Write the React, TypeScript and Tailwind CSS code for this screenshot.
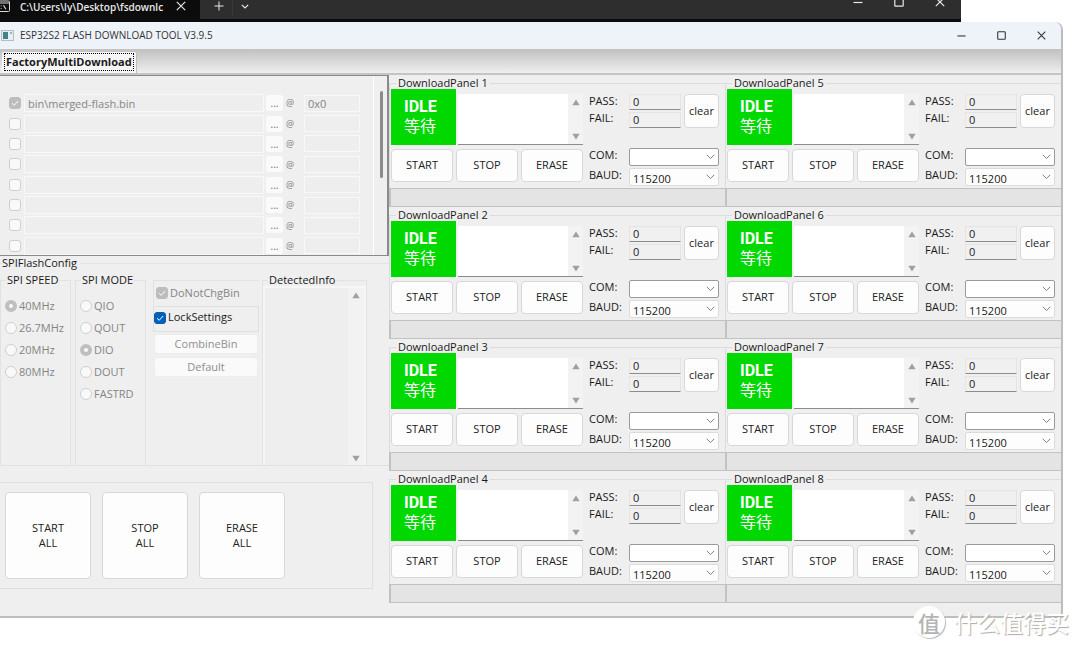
import React from "react";

const FILE_ROWS = [
  { path: "bin\\merged-flash.bin", offset: "0x0", on: true },
  { path: "", offset: "", on: false },
  { path: "", offset: "", on: false },
  { path: "", offset: "", on: false },
  { path: "", offset: "", on: false },
  { path: "", offset: "", on: false },
  { path: "", offset: "", on: false },
  { path: "", offset: "", on: false },
];

function CloseIcon({ className }: { className: string }) {
  return (
    <svg viewBox="0 0 10 10" className={className} fill="none" stroke="currentColor" strokeWidth="1.2">
      <path d="M0.8 0.8 9.2 9.2M9.2 0.8 0.8 9.2" />
    </svg>
  );
}

function MinIcon({ className }: { className: string }) {
  return (
    <svg viewBox="0 0 10 10" className={className} fill="none" stroke="currentColor" strokeWidth="1.2">
      <path d="M0.5 5.5h9" />
    </svg>
  );
}

function MaxIcon({ className }: { className: string }) {
  return (
    <svg viewBox="0 0 10 10" className={className} fill="none" stroke="currentColor" strokeWidth="1.2">
      <rect x="0.8" y="0.8" width="8.4" height="8.4" rx="0.8" />
    </svg>
  );
}

function Terminal() {
  return (
    <div className="mr-[119px] flex h-[22px] items-start overflow-hidden border-b-3 border-[#0c0c0c] bg-[#2e2e2e] text-[#e8e8e8]">
      <div className="flex h-full w-[200px] shrink-0 items-start bg-[#0c0c0c]">
        <svg viewBox="0 0 10 12" className="h-3 w-[10px] shrink-0" fill="none" stroke="#d6d6d6">
          <path d="M-4 1h12.5q1 0 1 1v8.5q0 1-1 1H-4M-4 3h13" />
          <path d="M3.5 5.2l2.4 4M1.2 5.5v.8M1.2 8v.8" strokeWidth="1.2" />
        </svg>
        <div className="ml-[10px] w-[147px] text-[10px] leading-[14px] font-semibold whitespace-nowrap">
          C:\Users\ly\Desktop\fsdownlc
        </div>
        <button aria-label="Close tab" className="mt-[1px] ml-[9px]">
          <CloseIcon className="size-[10px]" />
        </button>
      </div>
      <button aria-label="New tab" className="mt-[1px] ml-[14px]">
        <svg viewBox="0 0 10 10" className="size-[10px]" stroke="currentColor">
          <path d="M5 0.5v9M0.5 5h9" />
        </svg>
      </button>
      <span className="ml-2 h-4 w-px bg-[#3a3a3a]" />
      <button aria-label="Tab menu" className="mt-1 ml-2">
        <svg viewBox="0 0 8 5" className="h-[5px] w-2" fill="none" stroke="currentColor" strokeWidth="1.2">
          <path d="M0.8 0.8 4 4 7.2 0.8" />
        </svg>
      </button>
      <div className="ml-auto flex gap-[31px] pr-4">
        <button aria-label="Minimize terminal" className="-mt-[3px]"><MinIcon className="size-[10px]" /></button>
        <button aria-label="Maximize terminal" className="-mt-[3px]"><MaxIcon className="size-[10px]" /></button>
        <button aria-label="Close terminal" className="-mt-[3px]"><CloseIcon className="size-[10px]" /></button>
      </div>
    </div>
  );
}

function TitleBar() {
  return (
    <header className="flex h-[27px] items-center rounded-tr-lg bg-[#eef3fa] pr-[15px] text-[#333]">
      <svg viewBox="0 0 13 11" className="ml-[1px] h-[11px] w-[13px]">
        <rect x="0.5" y="0.5" width="12" height="10" fill="#e9eef2" stroke="#b5bcc2" />
        <rect x="2" y="2" width="5" height="7" fill="#3f8587" />
        <rect x="9" y="2" width="2" height="2" fill="#8cb3c4" />
      </svg>
      <h1 className="ml-[6px] text-[10px]">ESP32S2 FLASH DOWNLOAD TOOL V3.9.5</h1>
      <div className="ml-auto flex gap-[31px]">
        <button aria-label="Minimize"><MinIcon className="size-[9px]" /></button>
        <button aria-label="Maximize"><MaxIcon className="size-[9px]" /></button>
        <button aria-label="Close"><CloseIcon className="size-[9px]" /></button>
      </div>
    </header>
  );
}

function Check({ label, checked, disabled, children }: { label?: string; checked: boolean; disabled?: boolean; children?: React.ReactNode }) {
  return (
    <label className={disabled ? "flex items-center gap-[2px] text-[#858585]" : "flex items-center gap-[2px] text-[#1a1a1a]"}>
      <span className="grid size-3 shrink-0">
        <input
          type="checkbox"
          aria-label={label}
          defaultChecked={checked}
          disabled={disabled}
          className="col-start-1 row-start-1 size-3 appearance-none rounded-[3px] border border-[#cfcfcf] bg-[#f9f9f9] checked:border-[#005fb8] checked:bg-[#005fb8] disabled:checked:border-[#bdbdbd] disabled:checked:bg-[#bdbdbd]"
        />
        {checked && (
          <svg viewBox="0 0 12 12" className="pointer-events-none col-start-1 row-start-1 size-3" fill="none" stroke="#fff">
            <path d="M3 6.2 5.2 8.3 9.2 4" />
          </svg>
        )}
      </span>
      {children}
    </label>
  );
}

function FileList() {
  return (
    <section className="flex h-[181px] overflow-hidden border-t border-r-2 border-b border-[#8a8a8a]">
      <div className="mt-[17px] -mb-[1px] flex flex-1 flex-col">
        {FILE_ROWS.map((row, i) => (
          <div key={i} className="flex flex-1 items-center pl-[9px]">
            <Check label={`Use file ${i + 1}`} checked={row.on} disabled />
            <input
              aria-label={`File path ${i + 1}`}
              defaultValue={row.path}
              disabled
              className="ml-[3px] h-[18px] min-w-0 flex-1 border border-[#f8f8f8] bg-[#eeeeee] px-[3px] text-[11px] text-[#858585]"
            />
            <button disabled aria-label={`Browse file ${i + 1}`} className="ml-[2px] h-4 w-[17px] rounded-[2px] bg-[#fafafa] text-[10px] leading-4 text-[#707070]">
              ...
            </button>
            <span className="ml-[3px] w-[10px] text-[9px] text-[#7d7d7d]">@</span>
            <input
              aria-label={`Offset ${i + 1}`}
              defaultValue={row.offset}
              disabled
              className="ml-2 h-[17px] w-14 border border-[#f8f8f8] bg-[#eeeeee] px-[3px] text-[11px] text-[#858585]"
            />
          </div>
        ))}
      </div>
      <div className="ml-[13px] w-[14px] border-l border-white pt-[15px] pl-[6px]">
        <div className="h-[87px] w-[3px] rounded-full bg-[#8b8b8b]" />
      </div>
    </section>
  );
}

function RadioGroup({ title, name, items, value }: { title: string; name: string; items: string[]; value: string }) {
  return (
    <fieldset className="w-[71px] min-w-0 border border-[#e2e2e2] pt-[9px] pl-1">
      <legend className="ml-[1px] px-[1px] text-[11px] leading-3 whitespace-nowrap text-[#1a1a1a]">{title}</legend>
      {items.map((it) => (
        <label key={it} className="flex h-[22px] items-center gap-[2px] whitespace-nowrap text-[#858585]">
          <input
            type="radio"
            name={name}
            disabled
            defaultChecked={it === value}
            className="size-3 shrink-0 appearance-none rounded-full border border-[#cfcfcf] bg-[#f9f9f9] checked:border-4 checked:border-[#bfbfbf]"
          />
          {it}
        </label>
      ))}
    </fieldset>
  );
}

function Arrow({ down }: { down?: boolean }) {
  return (
    <svg viewBox="0 0 8 7" className="h-[7px] w-2" fill="#a0a0a0">
      {down ? <path d="M0.3 0.8h7.4L4 6.6z" /> : <path d="M0.3 6.2h7.4L4 0.4z" />}
    </svg>
  );
}

function FlashConfig() {
  return (
    <fieldset className="mt-[1px] h-[209px] min-w-0 border-t border-b border-[#e2e2e2]">
      <legend className="ml-[2px] pr-[3px] text-[11px] leading-3">SPIFlashConfig</legend>
      <div className="mt-[5px] flex h-[192px] items-stretch">
        <RadioGroup title="SPI SPEED" name="speed" items={["40MHz", "26.7MHz", "20MHz", "80MHz"]} value="40MHz" />
        <div className="w-1" />
        <RadioGroup title="SPI MODE" name="mode" items={["QIO", "QOUT", "DIO", "DOUT", "FASTRD"]} value="DIO" />
        <div className="mt-[6px] ml-[7px] flex w-[106px] flex-col">
          <div className="flex h-[25px] items-center border-t border-l border-[#e2e2e2] pl-[2px]">
            <Check checked disabled>DoNotChgBin</Check>
          </div>
          <div className="mt-[1px] flex h-[26px] items-center border border-[#e0e0e0] pb-[3px]">
            <Check checked>LockSettings</Check>
          </div>
          <button disabled className="mx-[1px] mt-[2px] h-5 rounded-[3px] border border-[#ededed] bg-[#fafafa] leading-4 text-[#8f8f8f]">CombineBin</button>
          <button disabled className="mx-[1px] mt-[3px] h-5 rounded-[3px] border border-[#ededed] bg-[#fafafa] leading-4 text-[#8f8f8f]">Default</button>
        </div>
        <fieldset className="ml-[3px] w-[105px] min-w-0 border border-[#e2e2e2]">
          <legend className="ml-[5px] px-[1px] text-[11px] leading-3">DetectedInfo</legend>
          <div className="flex h-[179px] border-2 border-b-0 border-[#f6f6f6]">
            <textarea aria-label="Detected info" disabled className="w-0 min-w-0 flex-1 resize-none bg-[#eeeeee]" />
            <div className="flex w-4 flex-col items-center justify-between bg-[#f2f2f2] pt-1 pb-[3px]">
              <Arrow />
              <Arrow down />
            </div>
          </div>
        </fieldset>
      </div>
    </fieldset>
  );
}

function AllButtons() {
  return (
    <section className="mt-4 mr-4 flex h-[107px] gap-[11px] border border-l-0 border-[#dfdfdf] py-[9px] pl-[5px]">
      {["START", "STOP", "ERASE"].map((t) => (
        <button key={t} className="w-[86px] rounded-[4px] border border-[#d8d8d8] bg-[#fdfdfd] pb-[2px] text-[11px] leading-[15px] text-[#222]">
          {t}
          <br />
          ALL
        </button>
      ))}
    </section>
  );
}

function Chevron() {
  return (
    <svg viewBox="0 0 9 6" className="pointer-events-none col-start-1 row-start-1 mr-1 h-[6px] w-[9px] self-center justify-self-end" fill="none" stroke="#808080">
      <path d="M0.8 0.8 4.5 4.6 8.2 0.8" />
    </svg>
  );
}

function Panel({ n }: { n: number }) {
  const id = `p${n}`;
  return (
    <section className="h-[132px] min-w-0 pt-[2px]">
      <fieldset className="h-[111px] min-w-0 border-t border-l border-[#dcdcdc] pl-[1px]">
        <legend className="ml-[5px] px-[2px] text-[11px] leading-3">DownloadPanel {n}</legend>
        <div className="flex pr-[6px]">
          <div className="flex min-w-0 flex-1 flex-col">
            <div className="flex h-14 gap-[2px]">
              <div className="flex w-[65px] shrink-0 flex-col bg-[#00d800] pt-[9px] pl-[13px] text-[16px] leading-[18px] text-white">
                <span className="font-[Roboto] font-bold">IDLE</span>
                <span className="font-['Noto_Sans_CJK_SC',sans-serif]">等待</span>
              </div>
              <div className="mt-[5px] flex min-w-0 flex-1 border-b border-[#8c8c8c] bg-white">
                <textarea aria-label={`Log ${n}`} readOnly className="w-0 min-w-0 flex-1 resize-none bg-white" />
                <div className="flex w-[15px] flex-col items-center justify-between bg-[#f3f3f3] pt-[5px] pb-1">
                  <Arrow />
                  <Arrow down />
                </div>
              </div>
            </div>
            <div className="mt-1 grid grid-cols-3 gap-[3px]">
              {["START", "STOP", "ERASE"].map((t) => (
                <button key={t} className="h-[33px] rounded-[4px] border border-[#d8d8d8] bg-[#fdfdfd] text-[11px] text-[#222]">{t}</button>
              ))}
            </div>
          </div>
          <div className="mt-[5px] ml-[6px] w-[130px] shrink-0">
            <div className="flex">
              <div className="w-10">
                <label htmlFor={`${id}-pass`} className="block h-[17px] leading-[14px]">PASS:</label>
                <label htmlFor={`${id}-fail`} className="block h-[17px] leading-[14px]">FAIL:</label>
              </div>
              <div className="flex w-[52px] flex-col gap-[2px]">
                <input id={`${id}-pass`} readOnly value="0" className="h-4 w-full border border-[#e4e4e4] border-b-[#8c8c8c] bg-[#f0f0f0] px-[3px] text-[11px]" />
                <input id={`${id}-fail`} readOnly value="0" className="h-4 w-full border border-[#e4e4e4] border-b-[#8c8c8c] bg-[#f0f0f0] px-[3px] text-[11px]" />
              </div>
              <button className="ml-[3px] h-[34px] flex-1 rounded-[4px] border border-[#d8d8d8] bg-[#fdfdfd] text-[11px] text-[#222]">clear</button>
            </div>
            <div className="mt-5 flex">
              <div className="w-10">
                <label htmlFor={`${id}-com`} className="block h-5 leading-[14px]">COM:</label>
                <label htmlFor={`${id}-baud`} className="block h-[18px] leading-[14px]">BAUD:</label>
              </div>
              <div className="flex flex-1 flex-col gap-[2px]">
                <div className="grid">
                  <select id={`${id}-com`} className="col-start-1 row-start-1 h-[18px] appearance-none rounded-[2px] border border-[#9a9a9a] bg-white px-[3px]">
                    <option></option>
                  </select>
                  <Chevron />
                </div>
                <div className="grid">
                  <select id={`${id}-baud`} className="col-start-1 row-start-1 h-[18px] appearance-none rounded-[2px] border border-[#dcdcdc] bg-[#fdfdfd] px-[3px] pt-[2px] leading-[13px]">
                    <option>115200</option>
                  </select>
                  <Chevron />
                </div>
              </div>
            </div>
          </div>
        </div>
      </fieldset>
      <div className="h-[19px] border-t border-b border-l-2 border-[#c2c2c2] bg-[#e4e4e4]" />
    </section>
  );
}

export default function App() {
  return (
    <div className="relative min-h-screen overflow-hidden bg-white font-['Open_Sans','Noto_Sans_CJK_SC',sans-serif] text-[11px] text-[#1a1a1a]">
      <Terminal />
      <div className="mr-[17px] rounded-tr-lg border-r-2 border-b-2 border-[#bdbdbd] bg-[#efefef]">
        <TitleBar />
        <nav className="flex h-[26px] items-end border-t border-b-2 border-[#c4c4c4] bg-linear-to-b from-[#c2c2c2] to-[#efefef] pl-[2px]">
          <button className="h-[21px] rounded-t-[2px] border-r border-[#bdbdbd] bg-[#f5f5f5] px-[2px] pb-[2px]">
            <span className="block border border-dotted border-black px-[1px] text-[11px] leading-4 font-bold">FactoryMultiDownload</span>
          </button>
        </nav>
        <main className="flex pb-[13px]">
          <div className="w-[389px] shrink-0">
            <FileList />
            <FlashConfig />
            <AllButtons />
          </div>
          <div className="grid min-w-0 flex-1 grid-flow-col grid-cols-2 grid-rows-4">
            {[1, 2, 3, 4, 5, 6, 7, 8].map((n) => (
              <Panel key={n} n={n} />
            ))}
          </div>
        </main>
      </div>
      <div className="pointer-events-none absolute right-[11px] bottom-[11px] flex items-center gap-[9px] font-['Noto_Sans_CJK_SC',sans-serif]">
        <span className="flex size-8 items-center justify-center rounded-full bg-white text-[22px] font-medium text-[#b4b4b4] shadow-[1px_1px_1px_#bbb]">值</span>
        <span className="text-[23px] leading-8 font-medium whitespace-nowrap text-white [text-shadow:1px_1px_1px_#aaa]">什么值得买</span>
      </div>
    </div>
  );
}
